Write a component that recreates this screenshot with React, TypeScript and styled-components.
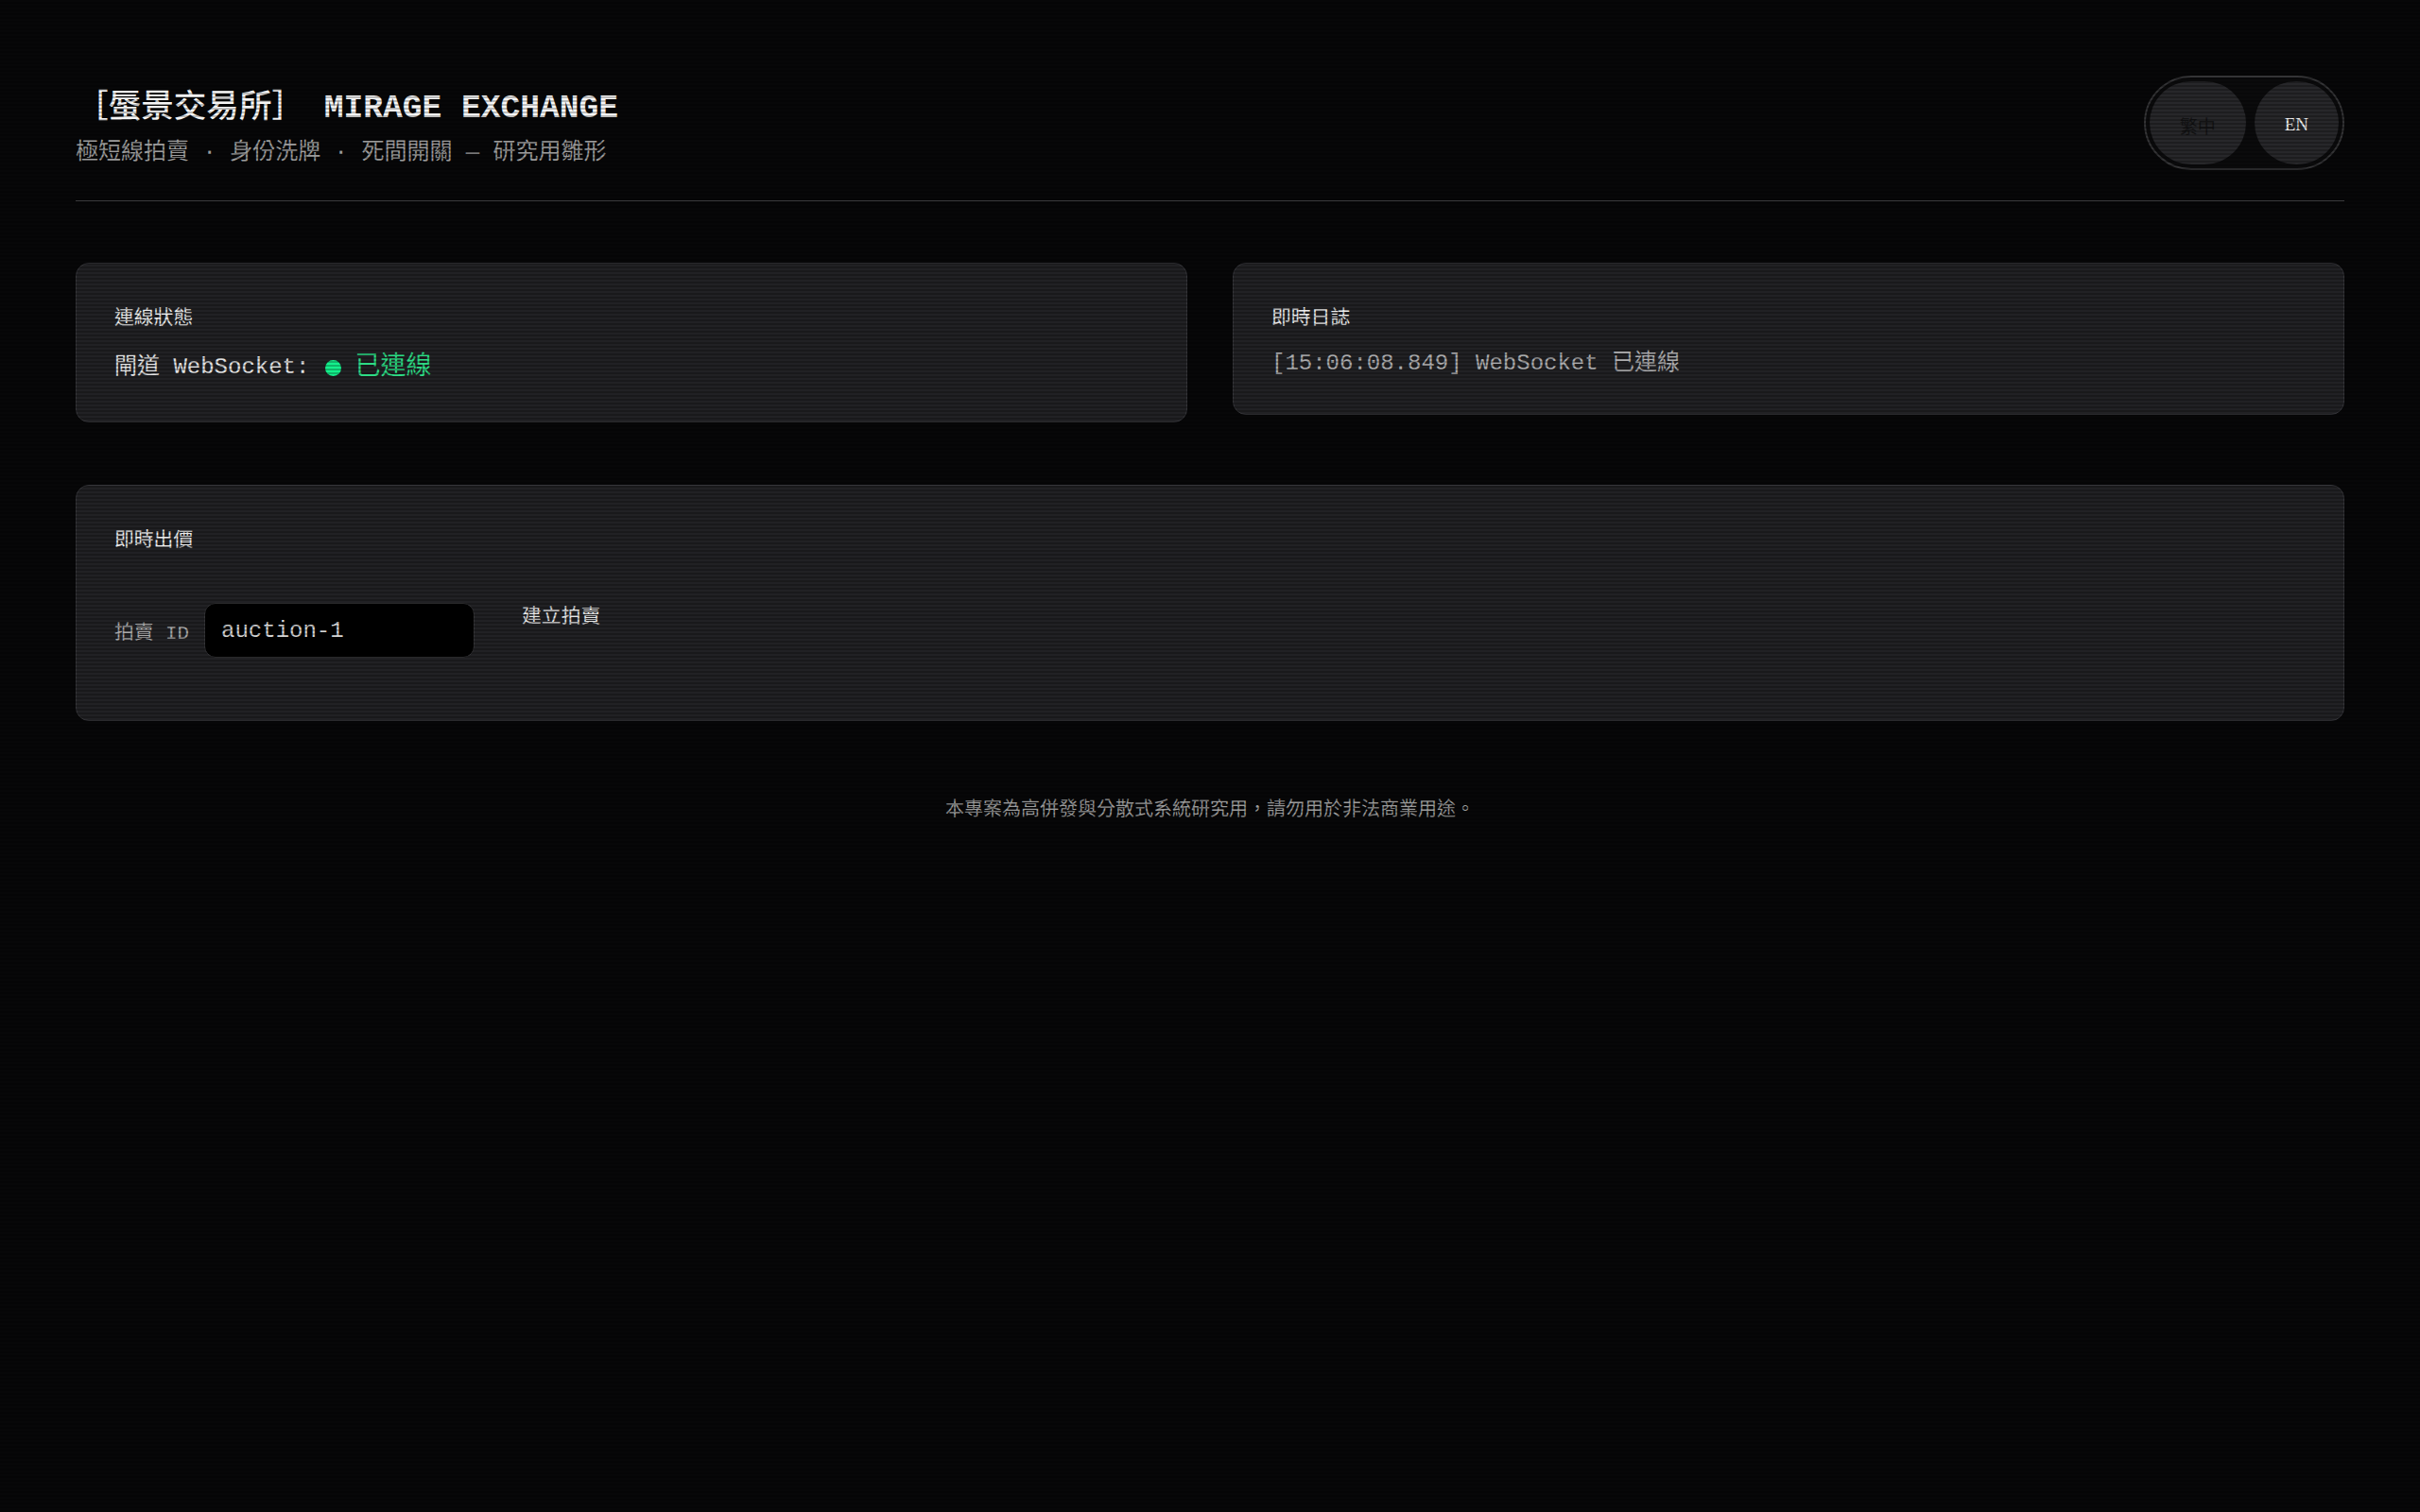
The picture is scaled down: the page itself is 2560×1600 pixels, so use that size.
import styled, { createGlobalStyle } from 'styled-components'

const GlobalStyle = createGlobalStyle`
  html, body {
    margin: 0;
    padding: 0;
    background: #070708;
  }

  body {
    color: #dcdcdc;
    font-family: 'Liberation Mono', 'Courier New', 'Noto Sans CJK TC', monospace;
    -webkit-font-smoothing: antialiased;
  }

  * {
    box-sizing: border-box;
  }
`

// thin CRT-style lines over the whole screen
const Scanlines = styled.div`
  position: fixed;
  inset: 0;
  pointer-events: none;
  z-index: 10;
  background: repeating-linear-gradient(
    to bottom,
    rgba(0, 0, 0, 0) 0px,
    rgba(0, 0, 0, 0) 2px,
    rgba(0, 0, 0, 0.24) 2px,
    rgba(0, 0, 0, 0.24) 4px
  );
`

const Page = styled.main`
  min-height: 100vh;
  padding: 80px;
`

const Header = styled.header`
  display: flex;
  justify-content: space-between;
  align-items: center;
  padding-bottom: 32px;
  border-bottom: 1px solid #3a3a3c;
`

const TitleBlock = styled.div`
  display: flex;
  flex-direction: column;
  gap: 8px;
  margin-top: 9px;
`

const Title = styled.h1`
  margin: 0;
  font-size: 34.6px;
  line-height: 46px;
  font-weight: 500;
  color: #f6f6f6;
`

const Brand = styled.span`
  font-weight: 700;
`

const Subtitle = styled.p`
  margin: 0;
  font-size: 24px;
  line-height: 32px;
  color: #9c9c9c;
`

const LangToggle = styled.div`
  display: flex;
  gap: 9px;
  padding: 4px;
  border: 2px solid #343436;
  border-radius: 60px;
  background: #0b0b0c;
`

const LangButton = styled.button<{ $active?: boolean }>`
  height: 88px;
  min-width: 88px;
  padding: 4px 32px 0;
  border: none;
  border-radius: 44px;
  background: #27272a;
  color: ${(p) => (p.$active ? '#131314' : '#f2f2f2')};
  font-family: 'Liberation Serif', 'Noto Sans CJK TC', serif;
  font-size: 19px;
  cursor: pointer;
`

const Grid = styled.section`
  display: grid;
  grid-template-columns: 1fr 1fr;
  column-gap: 48px;
  row-gap: 66px;
  align-items: start;
  margin-top: 65px;
`

const Card = styled.div<{ $wide?: boolean }>`
  grid-column: ${(p) => (p.$wide ? '1 / -1' : 'auto')};
  padding: 43px 40px 37px;
  background: #212124;
  border: 1px solid #36363a;
  border-radius: 14px;
`

const CardTitle = styled.h2`
  margin: 0 0 16px;
  font-size: 20.8px;
  line-height: 31px;
  font-weight: 400;
  color: #ececec;
`

const StatusLine = styled.div`
  display: flex;
  align-items: center;
  font-size: 24px;
  line-height: 40px;
  color: #e4e4e4;
`

const Dot = styled.span`
  width: 17px;
  height: 17px;
  margin: 0 14px 0 17px;
  border-radius: 50%;
  background: #14f08c;
`

const Connected = styled.span`
  font-size: 27px;
  color: #2edb85;
`

const LogLine = styled.div`
  font-size: 24px;
  line-height: 32px;
  color: #acacae;
`

const BidRow = styled.div`
  display: flex;
  align-items: center;
  gap: 16px;
  margin: 50px 0 29px;
`

const FieldLabel = styled.label`
  font-size: 20.8px;
  color: #a8a8a8;
`

const IdInput = styled.input`
  width: 286px;
  height: 58px;
  padding: 0 17px;
  background: #000;
  border: 1px solid #353538;
  border-radius: 12px;
  color: #d4d4d4;
  font-family: inherit;
  font-size: 24px;
  outline: none;
`

const GhostButton = styled.button`
  align-self: flex-start;
  padding: 0 34px;
  border: none;
  background: transparent;
  color: #e6e6e6;
  font-family: inherit;
  font-size: 20.8px;
  line-height: 31px;
  cursor: pointer;
`

const Footer = styled.footer`
  margin-top: 80px;
  text-align: center;
  font-size: 20px;
  line-height: 30px;
  color: #9a9a9a;
`

export default function App() {
  return (
    <>
      <GlobalStyle />
      <Page>
        <Header>
          <TitleBlock>
            <Title>
              ［蜃景交易所］ <Brand>MIRAGE EXCHANGE</Brand>
            </Title>
            <Subtitle>極短線拍賣 · 身份洗牌 · 死間開關 — 研究用雛形</Subtitle>
          </TitleBlock>
          <LangToggle>
            <LangButton $active>繁中</LangButton>
            <LangButton>EN</LangButton>
          </LangToggle>
        </Header>

        <Grid>
          <Card>
            <CardTitle>連線狀態</CardTitle>
            <StatusLine>
              閘道 WebSocket:
              <Dot />
              <Connected>已連線</Connected>
            </StatusLine>
          </Card>

          <Card>
            <CardTitle>即時日誌</CardTitle>
            <LogLine>[15:06:08.849] WebSocket 已連線</LogLine>
          </Card>

          <Card $wide>
            <CardTitle>即時出價</CardTitle>
            <BidRow>
              <FieldLabel htmlFor="auction-id">拍賣 ID</FieldLabel>
              <IdInput id="auction-id" defaultValue="auction-1" />
              <GhostButton>建立拍賣</GhostButton>
            </BidRow>
          </Card>
        </Grid>

        <Footer>本專案為高併發與分散式系統研究用，請勿用於非法商業用途。</Footer>
      </Page>
      <Scanlines />
    </>
  )
}
